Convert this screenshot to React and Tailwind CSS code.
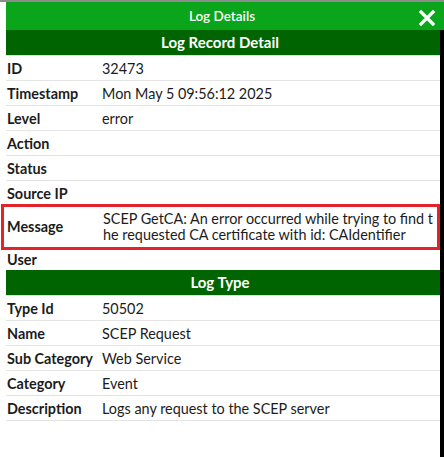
import React from "react"

const record = [
  ["ID", "32473"],
  ["Timestamp", "Mon May 5 09:56:12 2025"],
  ["Level", "error"],
  ["Action", ""],
  ["Status", ""],
  ["Source IP", ""],
]

const logType = [
  ["Type Id", "50502"],
  ["Name", "SCEP Request"],
  ["Sub Category", "Web Service"],
  ["Category", "Event"],
  ["Description", "Logs any request to the SCEP server"],
]

function Row({label, value}) {
  return (
    <div className="grid grid-cols-[96px_1fr] items-center h-[25px] pt-[1px] border-b border-[#e4e4e4]">
      <div className="pl-[1px] font-bold">{label}</div>
      <div>{value}</div>
    </div>
  )
}

function SectionHeader({children}) {
  return <div className="h-[26px] bg-[#006400] border-b border-[#c8f0c8] flex items-center justify-center pr-[6px] text-white font-bold text-[15px]">{children}</div>
}

export default function App() {
  return (
    <div className="w-[444px] h-[457px] bg-white border-t-2 border-[#8c8c8c] font-['Lato',sans-serif] text-[14.4px] text-[#1c1c1c]">
      {/* Title bar */}
      <div className="relative ml-[6px] h-[28px] bg-[#0aa51a] flex items-center justify-center pr-[6px] text-white font-semibold text-[13.5px]">
        Log Details
        <svg className="absolute right-[9px] top-[8px]" width="16" height="16" viewBox="0 0 16 16" fill="none">
          <path d="M2 2L14 14M14 2L2 14" stroke="white" strokeWidth="3.2" strokeLinecap="square" />
        </svg>
      </div>

      <div className="flex h-[427px]">
        <div className="flex-1 ml-[6px]">
          <SectionHeader>Log Record Detail</SectionHeader>
          {record.map(([label, value]) => (
            <Row key={label} label={label} value={value} />
          ))}

          {/* Highlighted message row */}
          <div className="-ml-[5px] -mt-[2px] h-[46px] border-[3px] border-[#e3222b] grid grid-cols-[99px_1fr] items-center">
            <div className="pl-[3px] font-bold">Message</div>
            <div className="break-all leading-[16px]">SCEP GetCA: An error occurred while trying to find the requested CA certificate with id: CAIdentifier</div>
          </div>

          <div className="h-[20px] flex items-center pl-[1px] font-bold">User</div>

          <SectionHeader>Log Type</SectionHeader>
          {logType.map(([label, value]) => (
            <Row key={label} label={label} value={value} />
          ))}
        </div>
        <div className="w-[4px] bg-black" />
      </div>
    </div>
  )
}
